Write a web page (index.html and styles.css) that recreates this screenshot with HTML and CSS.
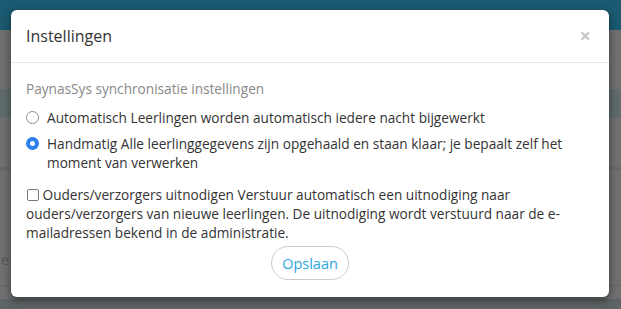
FILE: index.html
```html
<!DOCTYPE html>
<html lang="nl">
<head>
<meta charset="utf-8">
<title>Instellingen</title>
<link rel="stylesheet" href="styles.css">
</head>
<body>
<div class="page">
  <div class="topbar"></div>
  <div class="backdrop">
    <div class="bg-row bg-row-hl"></div>
    <div class="bg-row bg-row-line"></div>
    <div class="bg-row bg-row-line2"></div>
    <div class="bg-text">e</div>
  </div>
  <div class="modal">
    <div class="modal-header">
      <h4 class="modal-title">Instellingen</h4>
      <span class="close">×</span>
    </div>
    <div class="modal-body">
      <p class="section-label">PaynasSys synchronisatie instellingen</p>
      <label class="radio-row">
        <span class="radio"></span>
        <span class="radio-text">Automatisch Leerlingen worden automatisch iedere nacht bijgewerkt</span>
      </label>
      <label class="radio-row">
        <span class="radio checked"></span>
        <span class="radio-text">Handmatig Alle leerlinggegevens zijn opgehaald en staan klaar; je bepaalt zelf het moment van verwerken</span>
      </label>
      <p class="check-row"><span class="checkbox"></span> Ouders/verzorgers uitnodigen Verstuur automatisch een uitnodiging naar ouders/verzorgers van nieuwe leerlingen. De uitnodiging wordt verstuurd naar de e-mailadressen bekend in de administratie.</p>
      <div class="actions">
        <button class="btn">Opslaan</button>
      </div>
    </div>
  </div>
</div>
</body>
</html>
```
FILE: styles.css
```css
html, body {
  margin: 0;
  padding: 0;
}
body {
  width: 621px;
  height: 309px;
  overflow: hidden;
  font-family: "Open Sans", "Noto Sans", sans-serif;
  color: #333;
}
.page {
  position: relative;
  width: 621px;
  height: 309px;
  background: #6f6f6f;
}
.topbar {
  height: 30px;
  background: #1b5a70;
}
.backdrop {
  position: relative;
  height: 279px;
  background: #707070;
}
.bg-row {
  position: absolute;
  left: 0;
  right: 0;
}
.bg-row-hl {
  top: 59px;
  height: 29px;
  background: #5f6b6d;
}
.bg-row-line {
  top: 137px;
  height: 3px;
  background: #686868;
}
.bg-row-line2 {
  top: 255px;
  height: 1px;
  background: #656565;
}
.bg-text {
  position: absolute;
  left: 1px;
  top: 220px;
  font-size: 14px;
  color: #555;
}
.page::after {
  content: "";
  position: absolute;
  left: 0;
  right: 0;
  bottom: 0;
  height: 10px;
  background: #5e6365;
}
.modal {
  position: absolute;
  left: 11px;
  top: 10px;
  width: 598px;
  height: 287px;
  background: #fff;
  border-radius: 6px;
  box-shadow: 0 3px 9px rgba(0,0,0,0.5);
  z-index: 2;
}
.modal-header {
  display: flex;
  align-items: center;
  justify-content: space-between;
  height: 52px;
  padding: 0 15px;
  border-bottom: 1px solid #e5e5e5;
}
.modal-title {
  margin: 0;
  font-size: 16px;
  font-weight: 400;
  color: #333;
}
.close {
  font-size: 20px;
  font-weight: 700;
  color: #c8c8c8;
  line-height: 1;
  margin-right: 3px;
}
.modal-body {
  padding: 16px 15px 15px 15px;
  font-size: 13.65px;
  line-height: 19px;
}
.section-label {
  margin: 0 0 10px;
  color: #888;
}
.radio-row {
  display: flex;
  align-items: flex-start;
  margin-bottom: 7px;
}
.radio {
  flex: none;
  box-sizing: border-box;
  width: 13px;
  height: 13px;
  margin: 3px 8px 0 0;
  border: 1px solid #8c8c8c;
  border-radius: 50%;
  background: #fff;
}
.radio.checked {
  border: 4px solid #2a7ff0;
  background: #fff;
}
.check-row {
  margin: 13px 0 0;
}
.checkbox {
  display: inline-block;
  box-sizing: border-box;
  width: 12px;
  height: 12px;
  border: 1px solid #777;
  border-radius: 2px;
  vertical-align: -1px;
  margin-left: 1px;
}
.actions {
  display: flex;
  justify-content: center;
  margin-top: 4px;
}
.btn {
  font-family: inherit;
  font-size: 14.5px;
  color: #2aa6dc;
  background: #fff;
  border: 1px solid #ccc;
  border-radius: 18px;
  height: 34px;
  width: 78px;
  padding: 0;
}
```
